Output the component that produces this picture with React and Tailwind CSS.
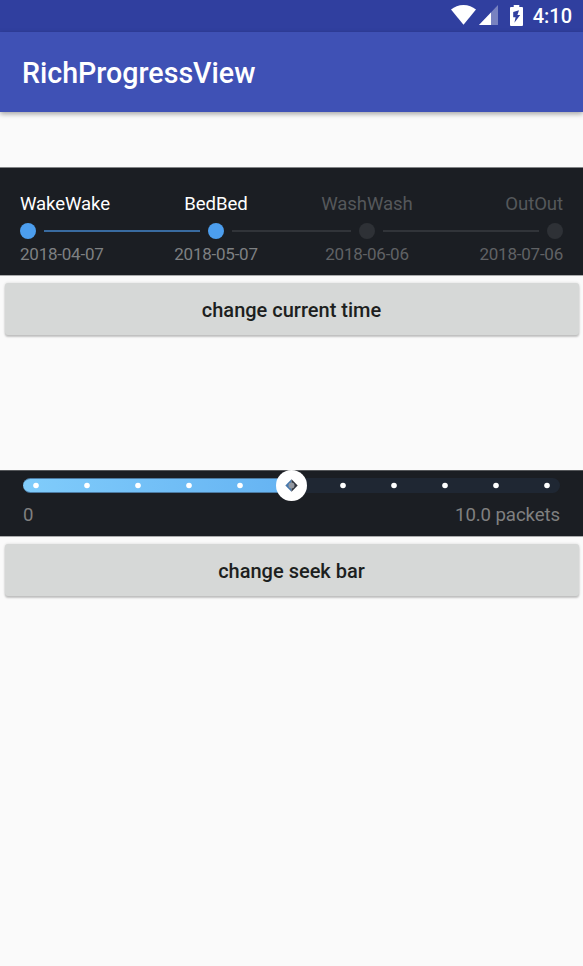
const steps = [
  { name: "WakeWake", date: "2018-04-07", col: "w-[102px] text-left", label: "text-white", sub: "text-[#7e8082]" },
  { name: "BedBed", date: "2018-05-07", col: "w-[188px] text-center", label: "text-white", sub: "text-[#7e8082]" },
  { name: "WashWash", date: "2018-06-06", col: "w-[114px] text-center", label: "text-[#55585b]", sub: "text-[#606265]" },
  { name: "OutOut", date: "2018-07-06", col: "w-[139px] text-right", label: "text-[#55585b]", sub: "text-[#606265]" },
];

function StatusBar() {
  return (
    <div className="flex h-8 items-center justify-end bg-[#303f9f] pr-[11px] text-white">
      <svg width="25" height="20" viewBox="0 0 25 20" className="mr-[3px] -mt-[2px]" fill="currentColor">
        <path d="M0 4.6C3.3 1.7 7.7 0 12.5 0S21.7 1.7 25 4.6L12.5 19.8Z" />
      </svg>
      <svg width="19" height="20" viewBox="0 0 19 20" className="mr-3 -mt-[2px]">
        <path d="M0 20 19 0v20Z" fill="#fff" fillOpacity=".35" />
        <path d="M0 20 12 7.4v12.6Z" fill="#fff" />
      </svg>
      <svg width="13" height="21" viewBox="0 0 13 21" className="mr-[10px] -mt-[2px]">
        <path d="M3.7 0h5.6v2H12q1 0 1 1v17q0 1-1 1H1q-1 0-1-1V3q0-1 1-1h2.7Z" fill="#fff" />
        <path d="M9 5.2 3.2 7v5.2h2.4L4.4 17.8 10.2 10H7.4Z" fill="#303f9f" />
      </svg>
      <span className="text-[20px] leading-8 font-medium">4:10</span>
    </div>
  );
}

function Dot({ on }) {
  return <div className={on ? "size-4 shrink-0 rounded-full bg-[#4c9eee]" : "size-4 shrink-0 rounded-full bg-[#2e3136]"} />;
}

function Timeline() {
  return (
    <section className="mt-[55px] h-[109px] border-t border-b border-t-[#828486] border-b-[#aaabac] bg-[#1b1e23] px-5 pt-[25px]">
      <div className="flex text-[18.6px] leading-[22px] tracking-[-0.1px]">
        {steps.map((s) => (
          <div key={s.name} className={`${s.col} ${s.label}`}>{s.name}</div>
        ))}
      </div>
      <div className="mt-[8px] flex items-center">
        <Dot on />
        <div className="mx-2 h-[2px] w-[156px] bg-[#396ba0]" />
        <Dot on />
        <div className="mx-2 h-[2px] w-[119px] bg-[#313439]" />
        <Dot />
        <div className="mx-2 h-[2px] w-[156px] bg-[#313439]" />
        <Dot />
      </div>
      <div className="mt-[5px] flex text-[17px] leading-5 tracking-[-0.23px]">
        {steps.map((s) => (
          <div key={s.date} className={`${s.col} ${s.sub}`}>{s.date}</div>
        ))}
      </div>
    </section>
  );
}

function Button({ children }) {
  return (
    <button className="mx-auto mt-[7px] block h-[52px] w-[574px] rounded-[3px] bg-[#d6d8d7] pt-px text-[20px] font-medium text-[#1d1f20] shadow-[0_2px_2px_rgba(0,0,0,0.2),0_0_3px_rgba(0,0,0,0.14)]">
      {children}
    </button>
  );
}

function SeekBar() {
  return (
    <section className="mt-[135px] h-[67px] border-t border-b border-t-[#55575a] border-b-[#aaabac] bg-[#1b1e23] px-[23px] pt-[7px]">
      <div className="relative flex h-[15px] items-center justify-between rounded-full bg-[#1f2733] px-[10px]">
        <div className="absolute inset-y-0 left-0 w-[268px] rounded-l-full border-y border-[#4c7ba3] bg-linear-to-r from-[#80ccfb] to-[#65b3f2]" />
        {Array.from({ length: 11 }, (_, i) => (
          <svg key={i} className="relative" width="6" height="7" viewBox="0 0 6 7">
            <circle cx="3" cy="3.5" r="2.8" fill="#fff" />
          </svg>
        ))}
        <div className="absolute top-[-8px] left-[253px] flex size-[31px] items-center justify-center rounded-full bg-white">
          <svg width="13" height="13" viewBox="0 0 13 13">
            <path d="M6.5 0.3v12.4L0.3 6.5Z" fill="#4779ad" />
            <path d="M6.5 0.3v12.4L12.7 6.5Z" fill="#30343d" />
            <circle cx="6.5" cy="6.5" r="3" fill="#9297a0" />
          </svg>
        </div>
      </div>
      <div className="mt-[11px] flex justify-between text-[18.6px] leading-[22px] tracking-[-0.08px] text-[#808080]">
        <span>0</span>
        <span>10.0 packets</span>
      </div>
    </section>
  );
}

export default function App() {
  return (
    <main className="h-[966px] w-[583px] overflow-hidden bg-[#fafafa] font-['Roboto',sans-serif]">
      <StatusBar />
      <header className="flex h-20 items-center bg-[#3f51b5] pt-[2px] pl-[22px] text-[28.6px] font-medium text-white shadow-[0_2px_5px_rgba(0,0,0,0.35)]">
        RichProgressView
      </header>
      <Timeline />
      <Button>change current time</Button>
      <SeekBar />
      <Button>change seek bar</Button>
    </main>
  );
}
